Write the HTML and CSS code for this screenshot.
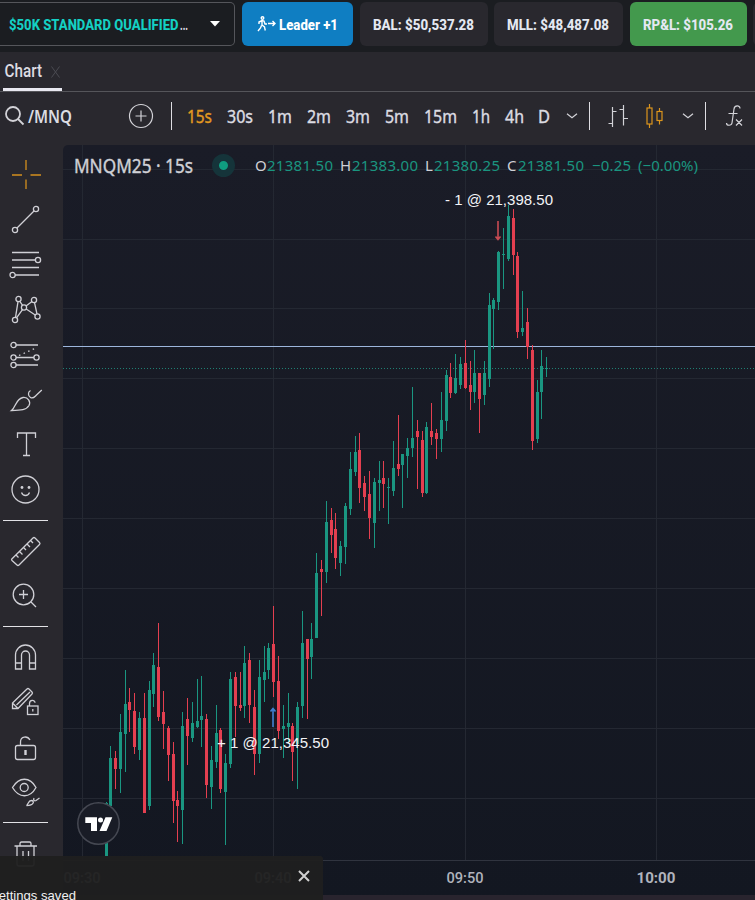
FILE: index.html
```html
<!DOCTYPE html>
<html lang="en">
<head>
    <meta charset="UTF-8">
    <meta name="viewport" content="width=device-width, initial-scale=1.0">
    <title>MNQM25 Chart</title>
    <link rel="stylesheet" href="styles.css">
</head>
<body>
    <header class="topbar">
        <div class="account">
            <span class="account-name"><svg width="180" height="20"><text x="0" y="15.500" textLength="169.500" lengthAdjust="spacingAndGlyphs">$50K STANDARD QUALIFIED</text><text class="dots" x="171" y="15.500" textLength="8" lengthAdjust="spacingAndGlyphs">...</text></svg></span>
            <svg class="caret" width="10" height="6"><path d="M0 0h10L5 5.500z"/></svg>
        </div>
        <div class="pill leader">
            <svg class="walk" width="19" height="16" viewBox="0 0 19 16"><circle cx="5.500" cy="2" r="1.300"/><path d="M2 8V6l3-1.500 2 .5 1 3h2M5 5v4l2.500 2 .8 3.500M4.500 9.500L3.500 12 1 15M11 7.500h7M15.500 5l2.500 2.500-2.500 2.500"/></svg>
            <svg width="60" height="20"><text x="0" y="15.500" textLength="59" lengthAdjust="spacingAndGlyphs">Leader +1</text></svg>
        </div>
        <div class="pill bal"><svg width="102" height="20"><text x="0" y="15.500" textLength="101" lengthAdjust="spacingAndGlyphs">BAL: $50,537.28</text></svg></div>
        <div class="pill mll"><svg width="103" height="20"><text x="0" y="15.500" textLength="102" lengthAdjust="spacingAndGlyphs">MLL: $48,487.08</text></svg></div>
        <div class="pill rpl"><svg width="91" height="20"><text x="0" y="15.500" textLength="90" lengthAdjust="spacingAndGlyphs">RP&amp;L: $105.26</text></svg></div>
        <div class="pill next"></div>
    </header>

    <nav class="tabs">
        <div class="tab">
            <svg width="38" height="24"><text x="-0.500" y="19" textLength="37.500" lengthAdjust="spacingAndGlyphs">Chart</text></svg>
            <svg class="tab-close" width="9" height="12"><path d="M.5.5l8 11M8.500.5l-8 11"/></svg>
        </div>
    </nav>

    <div class="toolbar">
        <div class="symbol">
            <svg class="icon" width="20" height="20"><circle cx="8" cy="8" r="7"/><path d="M13 13l5.500 5.500"/></svg>
            <svg width="46" height="24"><text class="symbol-name" x="0" y="18.500" textLength="44" lengthAdjust="spacingAndGlyphs">/MNQ</text></svg>
        </div>
        <svg class="icon add" width="26" height="26"><circle cx="13" cy="13" r="11.500"/><path d="M13 7.500v11M7.500 13h11"/></svg>
        <div class="divider"></div>
        <div class="frames">
            <svg class="active" width="25" height="24"><text y="18.500" textLength="25" lengthAdjust="spacingAndGlyphs">15s</text></svg>
            <svg width="26" height="24"><text y="18.500" textLength="26" lengthAdjust="spacingAndGlyphs">30s</text></svg>
            <svg width="24" height="24"><text y="18.500" textLength="24" lengthAdjust="spacingAndGlyphs">1m</text></svg>
            <svg width="24" height="24"><text y="18.500" textLength="24" lengthAdjust="spacingAndGlyphs">2m</text></svg>
            <svg width="24" height="24"><text y="18.500" textLength="24" lengthAdjust="spacingAndGlyphs">3m</text></svg>
            <svg width="24" height="24"><text y="18.500" textLength="24" lengthAdjust="spacingAndGlyphs">5m</text></svg>
            <svg width="33" height="24"><text y="18.500" textLength="33" lengthAdjust="spacingAndGlyphs">15m</text></svg>
            <svg width="18" height="24"><text y="18.500" textLength="18" lengthAdjust="spacingAndGlyphs">1h</text></svg>
            <svg width="18" height="24"><text y="18.500" textLength="19" lengthAdjust="spacingAndGlyphs">4h</text></svg>
            <svg width="12" height="24"><text y="18.500" textLength="12" lengthAdjust="spacingAndGlyphs">D</text></svg>
        </div>
        <svg class="icon chev" width="12" height="6"><path d="M1 .8l5 4 5-4"/></svg>
        <div class="divider second"></div>
        <svg class="icon bars" width="22" height="24"><path d="M5.500 3v20M1.500 19.500h4M5.500 7.500h4M16.500 1v20.500M12.500 5.500h4M16.500 14.500h4.500"/></svg>
        <svg class="icon candles" width="20" height="28"><path d="M4.500 2v4M4.500 22v4M14.500 6v4M14.500 18v4.500"/><rect x="2" y="6" width="5" height="16"/><rect x="12" y="9.500" width="5" height="9"/></svg>
        <svg class="icon chev-type" width="12" height="6"><path d="M1 .8l5 4 5-4"/></svg>
        <div class="divider third"></div>
        <svg class="icon fx" width="20" height="24"><path d="M15 4.500C15 1 9.500 1 9 5L7 19c-.5 3-5.500 3-5.500 0M3.500 9.500h9M11 15.500l6 6M17 15.500l-6 6"/></svg>
    </div>

    <main class="workspace">
        <aside class="tools">
            <svg class="tool selected"><path d="M2 16h10M20.500 16H31M16 1v10M16 20.500V30"/></svg>
            <svg class="tool"><circle cx="5" cy="26" r="2.600"/><circle cx="26" cy="5" r="2.600"/><path d="M7 24L24 7"/></svg>
            <svg class="tool"><circle cx="28" cy="11" r="2.600"/><circle cx="2.600" cy="26" r="2.600"/><path d="M2 3.500h27M2 11h23.500M2 18.500h27M5 26h24"/></svg>
            <svg class="tool"><circle cx="8.500" cy="5" r="2.600"/><circle cx="24" cy="6" r="2.600"/><circle cx="14" cy="13.500" r="2.600"/><circle cx="5" cy="26" r="2.600"/><circle cx="27.500" cy="22.500" r="2.600"/><path d="M8 7.600L5.500 23.400M9.800 7.300l2.800 4M12.500 15.600l-6 8.200M16 12l6-4.500M24.500 8.600L27 20M16.200 15l9 6"/></svg>
            <svg class="tool"><circle cx="3.500" cy="6" r="2.600"/><circle cx="3.500" cy="18.500" r="2.600"/><circle cx="26.500" cy="18.500" r="2.600"/><circle cx="3.500" cy="26" r="2.600"/><path d="M6 6h22M6 18.500h18M6 26h22"/><path class="dotted" d="M9 16.500l18-8"/></svg>
            <svg class="tool"><path d="M1.500 26.500C6 23 6 14.500 13 13.500c5-.6 8 4 6 8-2.500 4.500-8 5-17.500 5zM20.500 6.500C17.500 8 18 12 20.500 13.500c2.500 1.500 4-.5 5.500-2l5.800-5.500"/></svg>
            <svg class="tool"><path d="M7.500 9V4h18v5M16.500 4v22.500M13 26.500h7"/></svg>
            <svg class="tool"><circle cx="15.500" cy="15.500" r="13.500"/><circle class="solid" cx="12" cy="13.500" r="1.400"/><circle class="solid" cx="19" cy="13.500" r="1.400"/><path d="M11.500 18.500c1.500 4 6.500 4 8 0"/></svg>
            <div class="rule"></div>
            <svg class="tool"><path d="M1.800 24L23 3q1-1 2 0l4.500 4.500q1 1 0 2L9 30q-1 1-2 0l-5-4.500q-.8-.8-.2-1.500zM6 20l2.500 2.500M9.500 16.500l3 3M13.500 12.500l2.500 2.500M17 9l3 3M20.500 5.500L23 8"/></svg>
            <svg class="tool"><circle cx="13.500" cy="14.500" r="10.300"/><path d="M13.500 10v9M9 14.500h9M21 22l5 5"/></svg>
            <div class="rule"></div>
            <svg class="tool"><path d="M5.500 28V14a10 10 0 0 1 20 0v14h-6V14a4 4 0 0 0-8 0v14zM5.500 22h6M19.500 22h6"/></svg>
            <svg class="tool"><path d="M2.500 22.500v-5.500L17 3q1-1 2 0l3 3q1 1 0 2L8 22.500zM2.500 17l5.500 5.500M6.500 19L20 6"/><rect x="17.500" y="20" width="10.500" height="8.500"/><path d="M19.500 20v-2.500c0-4 5.500-4 5.500-.8M22.800 23v2.500"/></svg>
            <svg class="tool"><rect x="5.500" y="14.500" width="20" height="14" rx="2"/><path d="M10.500 14.500V11c0-6 7-6.500 9.500-2"/><path class="key" d="M15.500 19v5"/></svg>
            <svg class="tool"><path d="M2.500 11.500C9 .5 20 .5 26 11.500 20 22.500 9 22.500 2.500 11.500zM16.500 29.500c2-1 1.500-5 5-5 3 0 3 5-5 5zM24 22c-1 2 .5 3.500 2 2.500l3.500-2.500"/><circle cx="14.200" cy="11.500" r="4"/></svg>
            <div class="rule"></div>
            <svg class="tool"><path d="M4.500 9h22.500M10 9V6.500Q10 5 11.500 5H19.500Q21 5 21 6.500V9M7 9v18q0 2 2 2h13q2 0 2-2V9M13 14v10M18.500 14v10"/></svg>
        </aside>

        <section class="chart">
            <svg class="plot" id="plot" width="692" height="755" viewBox="63 145 692 755"></svg>
            <div class="legend">
                <svg class="title" width="121" height="26"><text y="20" textLength="119" lengthAdjust="spacingAndGlyphs">MNQM25 · 15s</text></svg>
                <span class="status"></span>
                <svg width="446" height="24" class="ohlc">
                    <text x="0" y="17">O</text><text class="up" x="12" y="17" textLength="66">21381.50</text>
                    <text x="85" y="17">H</text><text class="up" x="97" y="17" textLength="66">21383.00</text>
                    <text x="170" y="17">L</text><text class="up" x="179" y="17" textLength="66">21380.25</text>
                    <text x="252" y="17">C</text><text class="up" x="263" y="17" textLength="66">21381.50</text>
                    <text class="up" x="337" y="17" textLength="39">−0.25</text><text class="up" x="383" y="17" textLength="60">(−0.00%)</text>
                </svg>
            </div>
        </section>
    </main>

    <div class="toast">
        <svg class="toast-close" width="12" height="12"><path d="M1 1l10 10M11 1L1 11"/></svg>
        <svg class="toast-text" width="80" height="18"><text x="-10" y="14" textLength="86" lengthAdjust="spacingAndGlyphs">Settings saved</text></svg>
    </div>

    <script src="chart.js"></script>
</body>
</html>
```

FILE: styles.css
```css
body {
    margin: 0;
    width: 755px;
    height: 900px;
    overflow: hidden;
    position: relative;
    background-color: #29282e;
    color: #dcdce2;
    font-family: Roboto, "Liberation Sans", sans-serif;
}
svg {
    display: block;
    flex-shrink: 0;
    overflow: visible;
}
text {
    fill: currentColor;
}
.topbar {
    height: 52px;
    box-sizing: border-box;
    padding-top: 2px;
    background-color: #1b1d21;
    display: flex;
    align-items: flex-start;
    overflow: hidden;
    font-size: 15.5px;
    font-weight: 800;
}
.account {
    width: 235px;
    height: 44px;
    box-sizing: border-box;
    border: 1px solid #55565b;
    border-left: none;
    border-radius: 0 5px 5px 0;
    display: flex;
    align-items: center;
    padding: 0 14px 0 9px;
    justify-content: space-between;
    margin-right: 7px;
    flex-shrink: 0;
    color: #14d0c4;
}
.dots {
    fill: #dcdce2;
}
.caret {
    fill: #fff;
}
.pill {
    height: 44px;
    border-radius: 6px;
    background-color: #29282e;
    display: flex;
    align-items: center;
    justify-content: center;
    flex-shrink: 0;
    color: #e4e8f2;
}
.leader {
    width: 111px;
    margin-right: 7px;
    background-color: #0f7ec2;
    color: #fff;
    gap: 3px;
}
.walk {
    fill: none;
    stroke: #fff;
    stroke-width: 1.4;
}
.bal {
    width: 128px;
    margin-right: 6px;
}
.mll {
    width: 129px;
    margin-right: 7px;
}
.rpl {
    width: 117px;
    margin-right: 6px;
    background-color: #43994d;
}
.next {
    width: 40px;
}
.tabs {
    height: 40px;
    box-sizing: border-box;
    border-bottom: 1px solid #55555a;
    padding-left: 3px;
    font-size: 18px;
    font-weight: 500;
}
.tab {
    width: 57px;
    height: 36px;
    padding-left: 2px;
    border-bottom: 3px solid #e8e8f0;
    display: flex;
    align-items: center;
    gap: 8px;
}
.tab-close {
    stroke: #4b4b52;
    margin-top: 3px;
    fill: none;
}
.toolbar {
    height: 53px;
    box-sizing: border-box;
    padding: 0 0 5px 5px;
    display: flex;
    align-items: center;
    font-family: "Noto Sans", sans-serif;
    font-size: 17.5px;
}
.frames text {
    stroke: currentColor;
    stroke-width: 0.4;
}
.icon {
    fill: none;
    stroke: #d3d3d8;
    stroke-width: 1.2;
}
.symbol {
    width: 123px;
    display: flex;
    align-items: center;
    gap: 3px;
}
.symbol .icon {
    stroke-width: 1.8;
}
.symbol-name {
    font-weight: 600;
}
.divider {
    width: 1px;
    height: 28px;
    margin-left: 17px;
    background-color: #dedee3;
}
.frames {
    display: flex;
    gap: 15px;
    margin-left: 15px;
}
.active {
    color: #e39a20;
}
.chev {
    margin-left: 16px;
}
.divider.second {
    margin-left: 11px;
}
.bars {
    margin-left: 17px;
}
.candles {
    margin-left: 16px;
    stroke: #dc951d;
}
.chev-type {
    margin-left: 17px;
}
.divider.third {
    margin-left: 11px;
}
.fx {
    margin-left: 19px;
}
.workspace {
    display: flex;
    height: 755px;
}
.tools {
    width: 63px;
    flex-shrink: 0;
    padding-top: 14px;
    box-sizing: border-box;
    display: flex;
    flex-direction: column;
}
.tool {
    width: 32px;
    height: 32px;
    margin: 0 0 13px 10px;
    fill: none;
    stroke: #d0d0d6;
    stroke-width: 1.3;
}
.selected {
    stroke: #d38f1e;
}
.solid {
    fill: #d0d0d6;
    stroke: none;
}
.dotted {
    stroke-dasharray: 1.5 3.5;
}
.key {
    stroke-width: 2.4;
}
.rule {
    width: 45px;
    height: 1px;
    flex-shrink: 0;
    margin: 1px 0 14px 3px;
    background-color: #e2e2e6;
}
.chart {
    width: 692px;
    height: 755px;
    position: relative;
    border-top-left-radius: 5px;
    overflow: hidden;
    background: linear-gradient(#1a1c27, #131721);
}
.legend {
    position: absolute;
    top: 8px;
    left: 11px;
    display: flex;
    align-items: center;
    font-family: "Noto Sans", sans-serif;
}
.title {
    font-size: 19px;
    color: #cfd0d6;
    stroke: #cfd0d6;
    stroke-width: 0.4;
}
.status {
    width: 9px;
    height: 9px;
    border: 7px solid #15343a;
    border-radius: 50%;
    background-color: #0f9d80;
    margin: 0 20px 2px 17px;
}
.ohlc {
    font-size: 15px;
    color: #cfd0d6;
}
.up {
    fill: #1a9580;
}
.toast {
    position: absolute;
    left: 0;
    bottom: 0;
    width: 323px;
    height: 44px;
    background-color: rgba(31, 31, 31, 0.96);
    border-top-right-radius: 3px;
    font-family: "Liberation Sans", sans-serif;
    font-size: 13.5px;
    color: #f0f0f0;
}
.toast-close {
    margin: 14px 0 0 298px;
    stroke: #d0d0d0;
    stroke-width: 2;
}
.toast-text {
    margin-top: 4px;
}

/* plot */
.grid {
    stroke: #242832;
}
.axis-line {
    stroke: #30343f;
}
.axis {
    font-family: Roboto, sans-serif;
    font-size: 14.5px;
    font-weight: 500;
    fill: #b0b3bc;
}
.axis.bold {
    font-weight: bold;
}
.bull {
    fill: #1a9681;
}
.bear {
    fill: #e43f50;
}
.entry-line {
    stroke: #9db6dc;
}
.last-line {
    stroke: #1f7f73;
    stroke-dasharray: 1 2;
}
.fill-label {
    font-family: "Liberation Sans", sans-serif;
    font-size: 15.5px;
    fill: #f2f3f6;
}
.arrow {
    fill: none;
    stroke-width: 1.6;
}
.sell {
    stroke: #c94b53;
}
.buy {
    stroke: #3f7fd0;
}
.badge {
    fill: #191c26;
    stroke: #454852;
    stroke-width: 1.5;
}
.logo {
    fill: #fff;
}
.footer-strip {
    fill: #29242e;
}
```

FILE: chart.js
```js
// x, high, low, body top, body bottom, 1 = up / 0 = down
const candles = [
    [106, 802, 856, 803, 856, 1], [110, 746, 806, 758, 806, 1], [115, 751, 789, 758, 769, 0],
    [120, 714, 793, 732, 769, 1], [125, 670, 772, 704, 734, 1], [129, 688, 732, 702, 710, 0],
    [134, 693, 754, 711, 747, 0], [139, 712, 760, 718, 750, 1], [144, 693, 813, 718, 813, 0],
    [149, 681, 810, 690, 806, 1], [153, 653, 707, 665, 694, 1], [158, 623, 721, 667, 717, 0],
    [163, 691, 749, 712, 724, 0], [168, 726, 781, 728, 755, 0], [173, 742, 823, 754, 801, 0],
    [177, 791, 842, 800, 806, 0], [182, 712, 844, 726, 810, 1], [187, 698, 765, 719, 736, 0],
    [192, 702, 742, 723, 738, 1], [197, 679, 728, 721, 727, 1], [201, 676, 747, 716, 720, 1],
    [206, 714, 798, 719, 785, 0], [211, 746, 809, 760, 787, 1], [216, 705, 768, 733, 762, 1],
    [220, 728, 793, 730, 789, 0], [225, 754, 845, 763, 792, 1], [230, 672, 768, 679, 764, 1],
    [235, 672, 737, 677, 706, 0], [240, 672, 711, 705, 708, 0], [244, 646, 718, 663, 706, 1],
    [249, 653, 723, 660, 705, 0], [254, 690, 775, 707, 754, 0], [259, 660, 763, 677, 754, 1],
    [264, 646, 702, 672, 680, 1], [268, 643, 679, 648, 670, 1], [273, 606, 697, 644, 682, 0],
    [278, 656, 739, 681, 731, 0], [283, 705, 758, 726, 729, 1], [288, 693, 744, 723, 727, 1],
    [292, 723, 781, 726, 752, 0], [297, 702, 789, 707, 744, 1], [302, 611, 718, 643, 706, 1],
    [307, 639, 719, 639, 659, 0], [311, 623, 679, 639, 657, 1], [316, 553, 638, 573, 638, 1],
    [321, 560, 616, 569, 572, 0], [326, 501, 583, 522, 572, 1], [331, 508, 553, 520, 535, 0],
    [335, 513, 569, 529, 558, 0], [340, 541, 576, 546, 563, 1], [345, 503, 564, 506, 547, 1],
    [350, 452, 515, 469, 509, 1], [355, 436, 476, 452, 472, 1], [359, 433, 503, 450, 488, 0],
    [364, 476, 511, 483, 497, 0], [369, 471, 539, 494, 518, 0], [374, 478, 548, 482, 523, 1],
    [379, 461, 511, 480, 483, 1], [383, 461, 508, 478, 484, 0], [388, 478, 524, 487, 488, 1],
    [393, 441, 496, 468, 491, 1], [398, 415, 476, 464, 469, 0], [402, 454, 508, 454, 465, 1],
    [407, 438, 478, 448, 456, 1], [412, 387, 457, 438, 448, 1], [417, 420, 489, 431, 437, 0],
    [422, 431, 497, 440, 493, 0], [426, 422, 494, 427, 493, 1], [431, 403, 445, 431, 437, 0],
    [436, 429, 459, 433, 439, 0], [441, 392, 452, 420, 439, 1], [446, 370, 431, 375, 421, 1],
    [450, 363, 398, 377, 393, 0], [455, 354, 394, 378, 393, 1], [460, 357, 389, 364, 385, 1],
    [465, 340, 389, 363, 388, 0], [470, 361, 410, 385, 392, 0], [474, 350, 403, 373, 392, 1],
    [479, 373, 433, 373, 399, 0], [484, 361, 405, 373, 395, 1], [489, 293, 387, 305, 379, 1],
    [493, 298, 349, 300, 309, 1], [498, 251, 310, 252, 302, 1], [503, 228, 289, 254, 255, 1],
    [508, 205, 261, 216, 259, 1], [513, 209, 275, 218, 255, 0], [517, 252, 338, 256, 332, 0],
    [522, 291, 336, 328, 332, 1], [527, 308, 359, 322, 347, 0], [532, 345, 450, 350, 441, 0],
    [537, 380, 443, 392, 439, 1], [541, 350, 419, 366, 392, 1], [546, 357, 377, 368, 369, 1]
];

const times = [[82, '09:30'], [273, '09:40'], [465, '09:50'], [656, '10:00']];
const rows = [169, 239, 308, 378, 448, 518, 588, 658, 728, 798];

let out = '';

for (const [x] of times) {
    out += `<path class="grid" d="M${x + 0.5} 145V860"/>`;
}
for (const y of rows) {
    out += `<path class="grid" d="M63 ${y + 0.5}H755"/>`;
}

out += '<path class="entry-line" d="M63 346.5H755"/>';
out += '<path class="last-line" d="M63 368.5H755"/>';

for (const [x, high, low, top, bottom, up] of candles) {
    const cls = up ? 'bull' : 'bear';
    out += `<rect class="${cls}" x="${x}" y="${high}" width="1" height="${low - high}"/>`;
    out += `<rect class="${cls}" x="${x - 1}" y="${top}" width="3" height="${bottom - top}"/>`;
}

// order fills
out += '<path class="arrow sell" d="M498 221v18M495.500 236.500l2.500 3 2.500-3"/>';
out += '<path class="arrow buy" d="M273 727v-18M270.500 711.500l2.500-3 2.500 3"/>';
out += '<text class="fill-label" x="445" y="205" textLength="108" lengthAdjust="spacingAndGlyphs">- 1 @ 21,398.50</text>';
out += '<text class="fill-label" x="217" y="748" textLength="112" lengthAdjust="spacingAndGlyphs">+ 1 @ 21,345.50</text>';

// logo
out += '<circle class="badge" cx="98.500" cy="823.500" r="20.700"/>';
out += '<path class="logo" d="M85.300 817.300H97V831h-6v-8h-5.700zM105.500 817.300h6.800L106.500 831h-7z"/>';
out += '<circle class="logo" cx="100.500" cy="820" r="2.500"/>';

// time axis
out += '<path class="axis-line" d="M63 860.500H755"/>';
for (const [x, label] of times) {
    const bold = label === '10:00';
    const w = bold ? 39 : 37;
    out += `<text class="axis${bold ? ' bold' : ''}" x="${x - w / 2}" y="883" textLength="${w}" lengthAdjust="spacingAndGlyphs">${label}</text>`;
}
out += '<rect class="footer-strip" x="63" y="895" width="692" height="5"/>';

document.getElementById('plot').innerHTML = out;
```
